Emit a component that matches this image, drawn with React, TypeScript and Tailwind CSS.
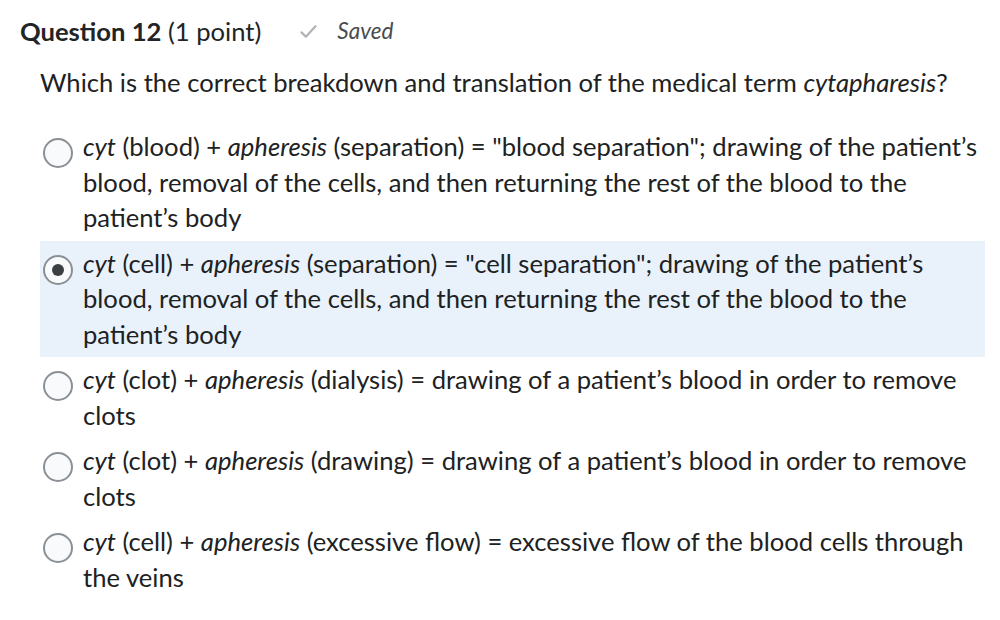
import type { ReactNode } from "react";

type Option = {
  id: number;
  content: ReactNode;
};

const options: Option[] = [
  {
    id: 1,
    content: (
      <>
        <i>cyt</i> (blood) + <i>apheresis</i> (separation) = "blood separation"; drawing of the patient’s blood, removal of the cells, and then returning the rest of the blood to the patient’s body
      </>
    ),
  },
  {
    id: 2,
    content: (
      <>
        <i>cyt</i> (cell) + <i>apheresis</i> (separation) = "cell separation"; drawing of the patient’s blood, removal of the cells, and then returning the rest of the blood to the patient’s body
      </>
    ),
  },
  {
    id: 3,
    content: (
      <>
        <i>cyt</i> (clot) + <i>apheresis</i> (dialysis) = drawing of a patient’s blood in order to remove clots
      </>
    ),
  },
  {
    id: 4,
    content: (
      <>
        <i>cyt</i> (clot) + <i>apheresis</i> (drawing) = drawing of a patient’s blood in order to remove clots
      </>
    ),
  },
  {
    id: 5,
    content: (
      <>
        <i>cyt</i> (cell) + <i>apheresis</i> (excessive flow) = excessive flow of the blood cells through the veins
      </>
    ),
  },
];

const selected = 2;

const Radio = ({ checked }: { checked: boolean }) => (
  <span className="mt-[9px] flex h-[30px] w-[30px] shrink-0 items-center justify-center rounded-full border-2 border-[#8b9096] bg-[#f9fafb]">
    {checked && <span className="h-[12px] w-[12px] rounded-full bg-[#3c3f42]" />}
  </span>
);

export default function App() {
  return (
    <div
      className="h-[620px] w-[1000px] bg-white text-[#2d3b45]"
      style={{ fontFamily: "Lato, 'Noto Sans', sans-serif" }}
    >
      <div className="flex items-center pl-5 pt-[13px]">
        <h2 className="text-[25.6px] leading-[36px] text-[#222426]">
          <span className="font-bold">Question 12</span> (1 point)
        </h2>
        <svg className="ml-[37px] h-[21px] w-[21px]" viewBox="0 0 24 24" fill="none" stroke="#b0b4b8" strokeWidth="2.6" strokeLinecap="round" strokeLinejoin="round">
          <path d="M4 13l5 5L20 6" />
        </svg>
        <span className="ml-[18px] text-[22.5px] italic text-[#494c4e]">Saved</span>
      </div>

      <p className="mt-[15px] pl-10 text-[25.6px] leading-[36px] text-[#202122]">
        Which is the correct breakdown and translation of the medical term <i>cytapharesis</i>?
      </p>

      <div className="mt-[24px] pl-10 pr-[15px]">
        {options.map((o) => (
          <div
            key={o.id}
            className={
              "flex gap-[10px] py-[5px] pl-[3px] " +
              (o.id === selected ? "bg-[#e9f2fb]" : "")
            }
          >
            <Radio checked={o.id === selected} />
            <div className="text-[25.6px] leading-[35.5px] text-[#202122]">{o.content}</div>
          </div>
        ))}
      </div>
    </div>
  );
}
